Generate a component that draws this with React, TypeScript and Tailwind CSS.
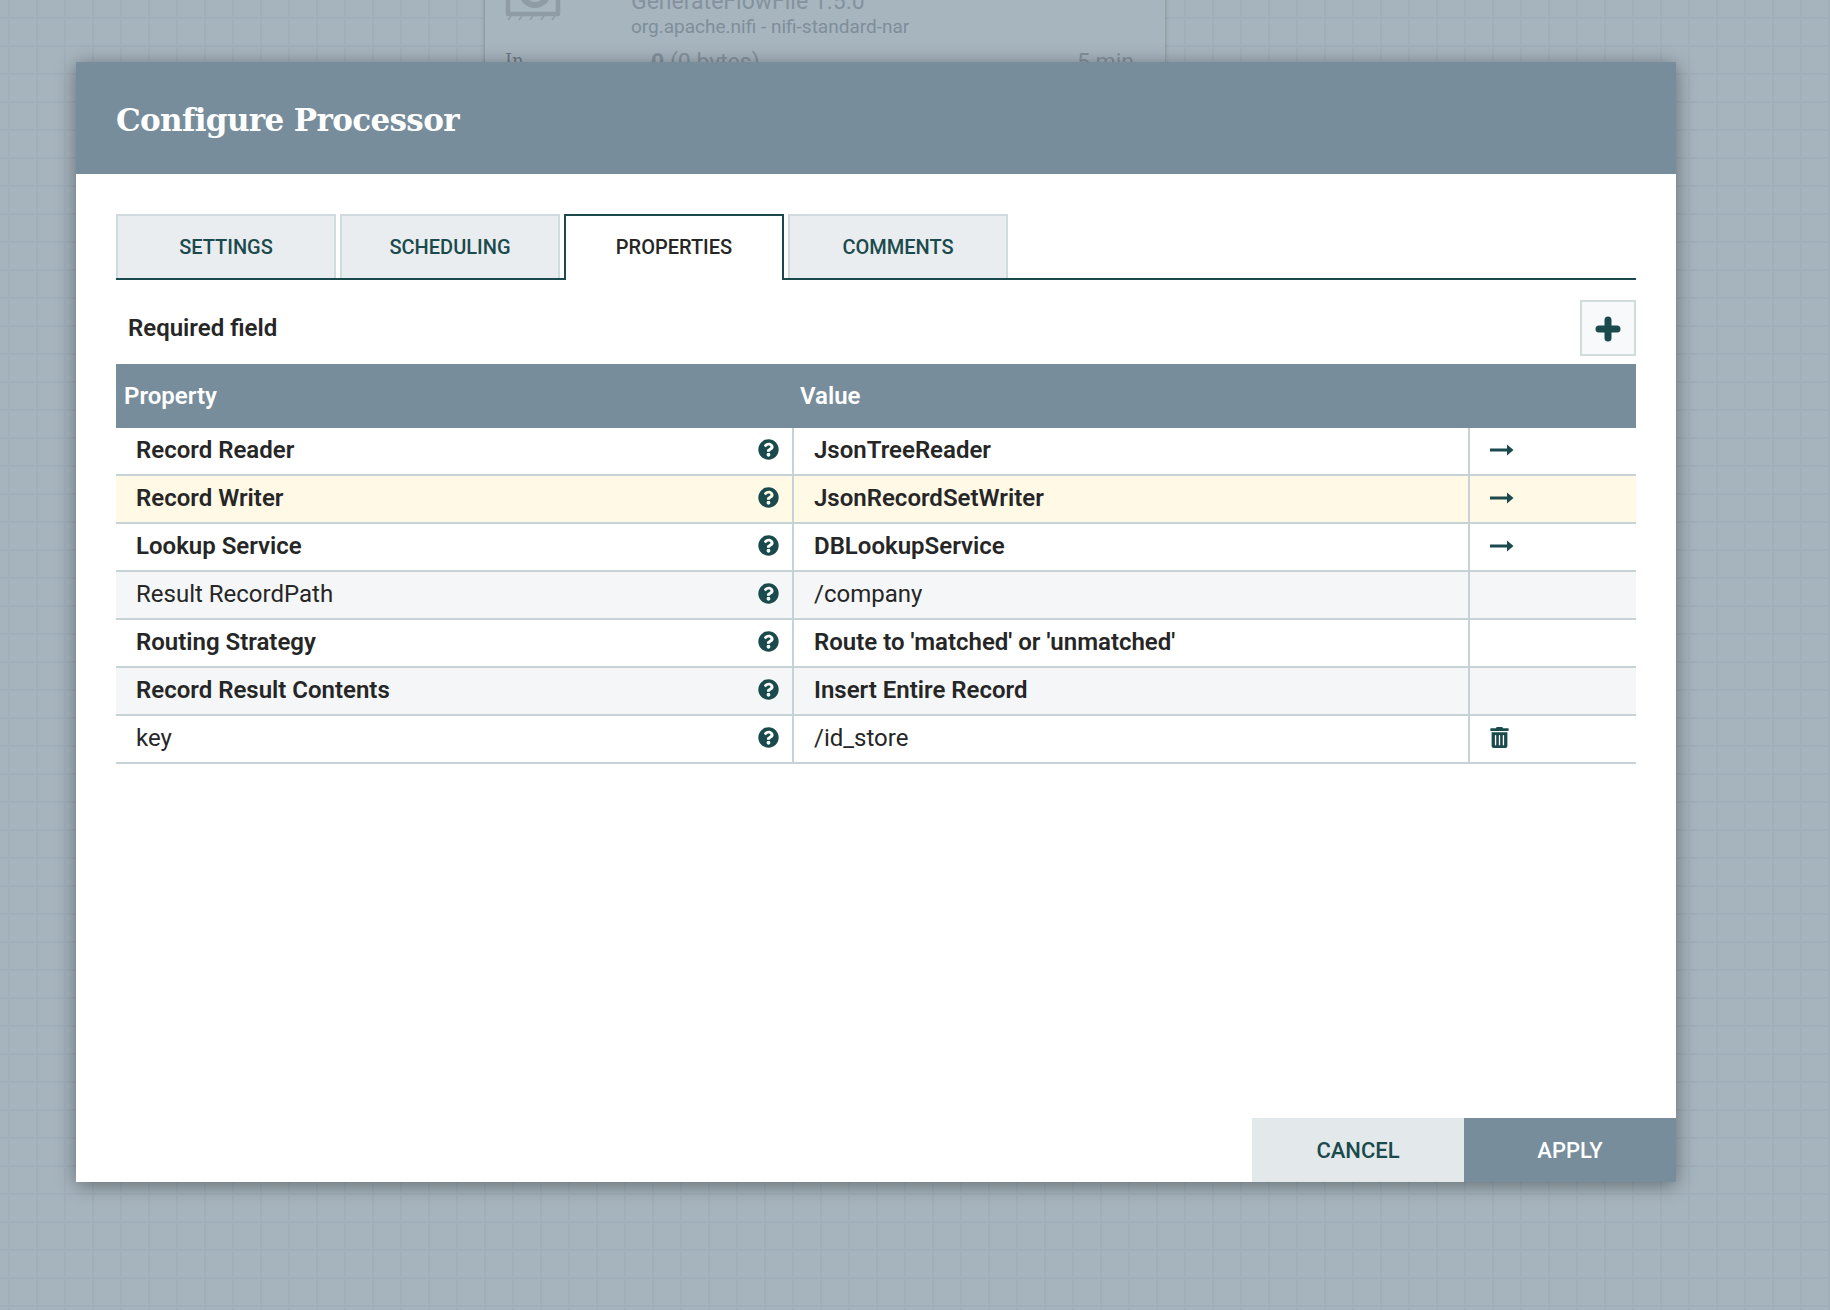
import React from "react";
import { FaQuestionCircle, FaTrashAlt } from "react-icons/fa";

const rows = [
  { name: "Record Reader", value: "JsonTreeReader", bold: true, bg: "bg-white", action: "arrow" },
  { name: "Record Writer", value: "JsonRecordSetWriter", bold: true, bg: "bg-[#fff9e6]", action: "arrow" },
  { name: "Lookup Service", value: "DBLookupService", bold: true, bg: "bg-white", action: "arrow" },
  { name: "Result RecordPath", value: "/company", bold: false, bg: "bg-[#f4f6f7]", action: "" },
  { name: "Routing Strategy", value: "Route to 'matched' or 'unmatched'", bold: true, bg: "bg-white", action: "" },
  { name: "Record Result Contents", value: "Insert Entire Record", bold: true, bg: "bg-[#f4f6f7]", action: "" },
  { name: "key", value: "/id_store", bold: false, bg: "bg-white", action: "trash" },
];

function Arrow() {
  return (
    <svg width="24" height="12" viewBox="0 0 24 12" className="text-[#1a4a4c]">
      <path d="M0 4.5H17V0.5L23.5 6L17 11.5V7.5H0Z" fill="currentColor" />
    </svg>
  );
}

function Tab({ label, active }: { label: string; active?: boolean }) {
  return active ? (
    <div className="relative z-10 -mb-[2px] flex h-[66px] w-[220px] items-center justify-center border-2 border-b-0 border-[#1a4a4c] bg-white pb-[2px] text-[20px] font-medium text-[#262626]">
      {label}
    </div>
  ) : (
    <div className="flex h-[64px] w-[220px] items-center justify-center border-2 border-b-0 border-[#cfdbdc] bg-[#e9edf0] text-[20px] font-medium text-[#1a4a4c]">
      {label}
    </div>
  );
}

export default function App() {
  return (
    <div className="relative h-[1310px] w-[1830px] overflow-hidden bg-[#a6b4bd] bg-[linear-gradient(to_right,#a0afba_2px,transparent_2px),linear-gradient(to_bottom,#a0afba_2px,transparent_2px)] bg-[length:28px_28px] bg-[position:8px_17px] font-['Roboto',sans-serif]">
      {/* processor on the canvas */}
      <div className="absolute left-[485px] top-[-40px] h-[140px] w-[680px] bg-[#a7b5bf] shadow-[0_0_4px_rgba(0,0,0,0.25)]">
        <svg width="58" height="22" viewBox="0 0 58 22" className="absolute left-[20px] top-[40px] text-[#8f9ca6]">
          <path d="M3 0V14H53V0" fill="none" stroke="currentColor" strokeWidth="4.5" strokeLinejoin="round" />
          <circle cx="30" cy="-8" r="13" fill="none" stroke="currentColor" strokeWidth="6" />
          <path d="M3 20l3-4M14 20l3-4M25 20l3-4M36 20l3-4M47 20l3-4" stroke="currentColor" strokeWidth="1.5" />
        </svg>
        <div className="absolute left-[146px] top-[29px] text-[23px] leading-[26px] text-[#84929d]">GenerateFlowFile 1.5.0</div>
        <div className="absolute left-[146px] top-[55px] text-[19px] leading-[24px] text-[#7f8e99]">org.apache.nifi - nifi-standard-nar</div>
        <div className="absolute left-[20px] top-[89px] font-['DejaVu_Serif',serif] text-[18px] leading-[24px] text-[#6e7c86]">In</div>
        <div className="absolute left-[166px] top-[89px] text-[23px] leading-[27px] text-[#84929d]"><b>0</b> (0 bytes)</div>
        <div className="absolute right-[31px] top-[89px] text-[23px] leading-[27px] text-[#84929d]">5 min</div>
      </div>

      {/* dialog */}
      <div className="absolute left-[76px] top-[62px] flex h-[1120px] w-[1600px] flex-col bg-white shadow-[0_3px_18px_rgba(0,0,0,0.4)]">
        <div className="flex h-[112px] items-center bg-[#778d9b] pl-[40px] pt-[4px] font-['DejaVu_Serif',serif] text-[31px] font-bold tracking-[-0.63px] text-white">
          Configure Processor
        </div>
        <div className="flex flex-1 flex-col px-[40px] pt-[40px]">
          <div className="flex h-[66px] items-end gap-[4px] border-b-2 border-[#1a4a4c]">
            <Tab label="SETTINGS" />
            <Tab label="SCHEDULING" />
            <Tab label="PROPERTIES" active />
            <Tab label="COMMENTS" />
          </div>
          <div className="flex h-[84px] items-center justify-between pl-[12px] pt-[12px]">
            <span className="text-[24px] font-semibold text-[#262626]">Required field</span>
            <div className="flex h-[56px] w-[56px] items-center justify-center border-2 border-[#cfdbdc] bg-[#f8f9fb] pt-[2px]">
              <svg width="26" height="26" viewBox="0 0 26 26" className="text-[#1a4a4c]">
                <path d="M13 4v18M4 13h18" stroke="currentColor" strokeWidth="7" strokeLinecap="round" />
              </svg>
            </div>
          </div>
          <div className="flex h-[64px] items-center bg-[#778d9b] text-[24px] font-semibold text-white">
            <div className="w-[678px] pl-[8px]">Property</div>
            <div className="pl-[6px]">Value</div>
          </div>
          {rows.map((r) => (
            <div key={r.name} className={`flex h-[48px] border-b-2 border-[#c7d2d7] text-[24px] leading-[44px] text-[#262626] ${r.bg} ${r.bold ? "font-semibold" : "font-normal"}`}>
              <div className="flex w-[678px] items-center justify-between border-r-2 border-[#c7d2d7] pb-[2px] pl-[20px] pr-[13px]">
                <span>{r.name}</span>
                <FaQuestionCircle className="mb-[1px] text-[21px] text-[#1a4a4c]" />
              </div>
              <div className="flex w-[676px] items-center border-r-2 border-[#c7d2d7] pb-[2px] pl-[20px]">{r.value}</div>
              <div className="flex flex-1 items-center pb-[2px] pl-[20px]">
                {r.action === "arrow" && <Arrow />}
                {r.action === "trash" && <FaTrashAlt className="-ml-[1px] mb-[1px] text-[21px] text-[#1a4a4c]" />}
              </div>
            </div>
          ))}
        </div>
        <div className="flex h-[64px] justify-end text-[22px]">
          <div className="flex w-[212px] items-center justify-center bg-[#e3e8eb] font-medium text-[#1a4a4c]">CANCEL</div>
          <div className="flex w-[212px] items-center justify-center bg-[#778d9b] font-medium text-white">APPLY</div>
        </div>
      </div>
    </div>
  );
}
